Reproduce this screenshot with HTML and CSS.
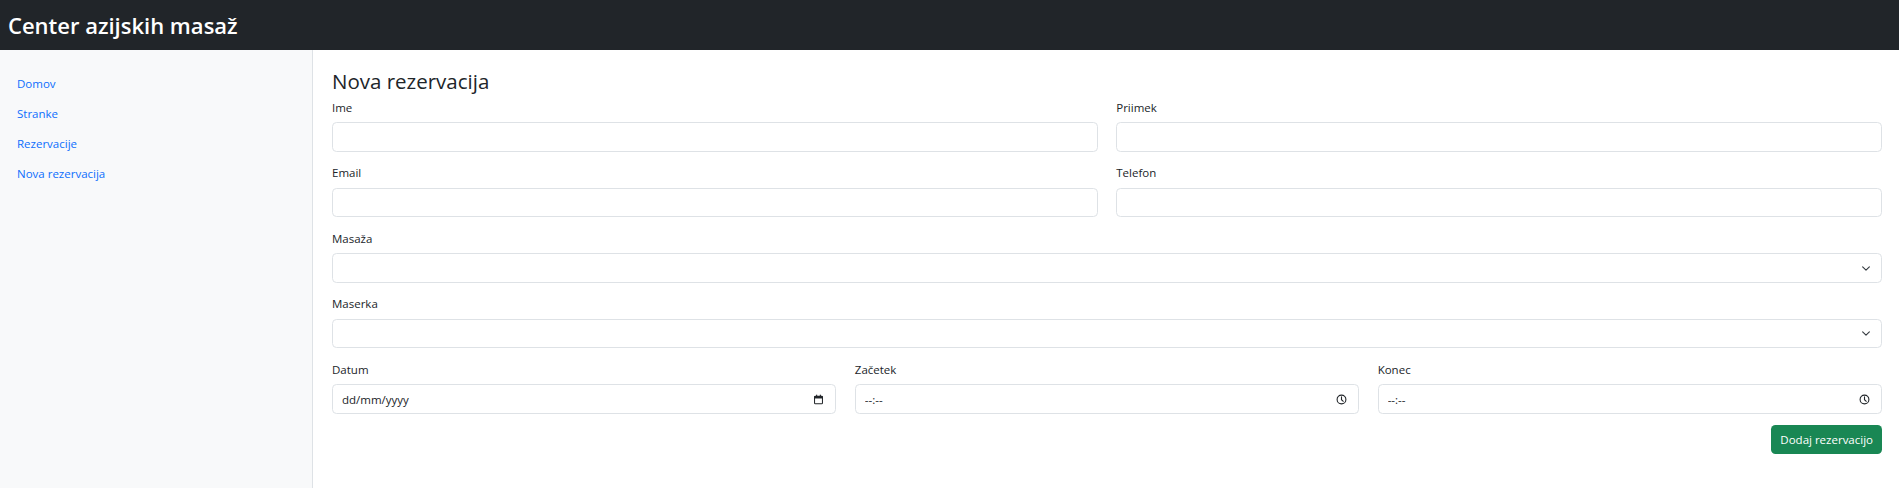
FILE: index.html
```html
<!DOCTYPE html>
<html lang="sl">
<head>
<meta charset="utf-8">
<title>Nova rezervacija</title>
<link rel="stylesheet" href="styles.css">
</head>
<body>
<header class="topbar">
  <span class="brand">Center azijskih masaž</span>
</header>
<div class="layout">
  <aside class="sidebar">
    <nav class="side-nav">
      <a class="side-link" href="#">Domov</a>
      <a class="side-link" href="#">Stranke</a>
      <a class="side-link" href="#">Rezervacije</a>
      <a class="side-link" href="#">Nova rezervacija</a>
    </nav>
  </aside>
  <main class="content">
    <h3 class="page-title">Nova rezervacija</h3>
    <form class="res-form">
      <div class="row row-2">
        <div class="field">
          <label class="field-label" for="ime">Ime</label>
          <input class="control" id="ime" type="text">
        </div>
        <div class="field">
          <label class="field-label" for="priimek">Priimek</label>
          <input class="control" id="priimek" type="text">
        </div>
      </div>
      <div class="row row-2">
        <div class="field">
          <label class="field-label" for="email">Email</label>
          <input class="control" id="email" type="text">
        </div>
        <div class="field">
          <label class="field-label" for="telefon">Telefon</label>
          <input class="control" id="telefon" type="text">
        </div>
      </div>
      <div class="field">
        <label class="field-label" for="masaza">Masaža</label>
        <select class="control select" id="masaza"><option></option></select>
      </div>
      <div class="field">
        <label class="field-label" for="maserka">Maserka</label>
        <select class="control select" id="maserka"><option></option></select>
      </div>
      <div class="row row-3 last-row">
        <div class="field">
          <label class="field-label" for="datum">Datum</label>
          <input class="control picker date" id="datum" type="text" placeholder="dd/mm/yyyy">
        </div>
        <div class="field">
          <label class="field-label" for="zacetek">Začetek</label>
          <input class="control picker time" id="zacetek" type="text" placeholder="--:--">
        </div>
        <div class="field">
          <label class="field-label" for="konec">Konec</label>
          <input class="control picker time" id="konec" type="text" placeholder="--:--">
        </div>
      </div>
      <div class="actions">
        <button class="btn-submit" type="submit">Dodaj rezervacijo</button>
      </div>
    </form>
  </main>
</div>
</body>
</html>
```

FILE: styles.css
```css
* { box-sizing: border-box; }

html, body {
  margin: 0;
  height: 100%;
}

body {
  font-family: "Open Sans", "Noto Sans", "Liberation Sans", sans-serif;
  font-size: 11.5px;
  color: #212529;
  background: #fff;
  display: flex;
  flex-direction: column;
}

.topbar {
  height: 50px;
  background: #212529;
  display: flex;
  align-items: center;
  padding: 0 8px;
  flex-shrink: 0;
}

.brand {
  color: #fff;
  font-size: 22px;
  font-weight: 600;
  line-height: 1.2;
}

.layout {
  flex: 1;
  display: grid;
  grid-template-columns: 313px 1fr;
}

.sidebar {
  background: #f8f9fa;
  border-right: 1px solid #dee2e6;
  padding: 18.5px 5px 0;
}

.side-nav {
  display: flex;
  flex-direction: column;
}

.side-link {
  display: block;
  padding: 6px 12px;
  line-height: 18px;
  color: #0d6efd;
  text-decoration: none;
  font-size: 11.5px;
}

.content {
  padding: 17.5px 17px 0 19px;
}

.page-title {
  margin: 0 0 5px;
  font-size: 20.5px;
  font-weight: 500;
  line-height: 26.4px;
}

.row {
  display: grid;
  column-gap: 18.5px;
}

.row-2 { grid-template-columns: 1fr 1fr; }
.row-3 { grid-template-columns: 1fr 1fr 1fr; }

.field {
  margin-bottom: 12.5px;
  min-width: 0;
}

.last-row .field { margin-bottom: 11px; }

.field-label {
  display: block;
  line-height: 18px;
  margin-bottom: 5.5px;
  font-size: 11.5px;
}

.control {
  display: block;
  width: 100%;
  height: 29.5px;
  padding: 4.5px 9px;
  font-family: inherit;
  font-size: 11.5px;
  color: #212529;
  background-color: #fff;
  border: 1px solid #dee2e6;
  border-radius: 4.5px;
  outline: none;
}

.control::placeholder {
  color: #212529;
  opacity: 1;
}

.select {
  appearance: none;
  -webkit-appearance: none;
  padding-right: 27px;
  background-image: url("data:image/svg+xml,%3csvg xmlns='http://www.w3.org/2000/svg' viewBox='0 0 16 16'%3e%3cpath fill='none' stroke='%23343a40' stroke-linecap='round' stroke-linejoin='round' stroke-width='2' d='m2 5 6 6 6-6'/%3e%3c/svg%3e");
  background-repeat: no-repeat;
  background-position: right 9px center;
  background-size: 12px 9px;
}

.picker {
  background-repeat: no-repeat;
  background-position: right 11px center;
  background-size: 11px 11px;
  padding-right: 28px;
}

.date {
  background-image: url("data:image/svg+xml,%3csvg xmlns='http://www.w3.org/2000/svg' viewBox='0 0 16 16'%3e%3crect x='2.25' y='3.25' width='11.5' height='11' rx='1.2' fill='none' stroke='%23212529' stroke-width='1.5'/%3e%3crect x='2' y='3' width='12' height='3.5' fill='%23212529'/%3e%3crect x='4.5' y='1' width='1.6' height='3' fill='%23212529'/%3e%3crect x='9.9' y='1' width='1.6' height='3' fill='%23212529'/%3e%3c/svg%3e");
}

.time {
  background-image: url("data:image/svg+xml,%3csvg xmlns='http://www.w3.org/2000/svg' viewBox='0 0 16 16'%3e%3ccircle cx='8' cy='8' r='6.4' fill='none' stroke='%23212529' stroke-width='1.6'/%3e%3cpath d='M8 4.2V8.2l2.6 2.4' fill='none' stroke='%23212529' stroke-width='1.6' stroke-linecap='round'/%3e%3c/svg%3e");
}

.actions {
  display: flex;
  justify-content: flex-end;
}

.btn-submit {
  height: 29px;
  padding: 0 9px;
  font-family: inherit;
  font-size: 11.5px;
  color: #fff;
  background: #198754;
  border: none;
  border-radius: 4.5px;
  cursor: pointer;
}
```
